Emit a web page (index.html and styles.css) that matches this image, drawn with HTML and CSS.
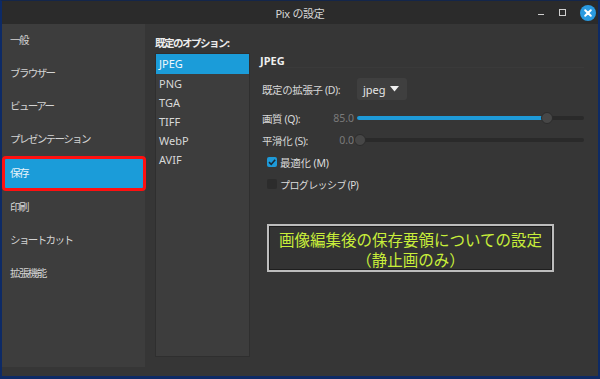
FILE: index.html
```html
<!DOCTYPE html>
<html lang="ja">
<head>
<meta charset="utf-8">
<title>Pix の設定</title>
<link rel="stylesheet" href="styles.css">
</head>
<body>
<div class="window">
  <div class="titlebar">
    <div></div>
    <div class="title">Pix の設定</div>
    <div class="controls">
      <span class="btn-min"></span>
      <span class="btn-max"></span>
      <span class="btn-close">
        <svg width="16" height="16" viewBox="0 0 16 16"><circle cx="8" cy="8" r="8" fill="#2a9ae0"/><path d="M5.2 5.2 L10.8 10.8 M10.8 5.2 L5.2 10.8" stroke="#fff" stroke-width="2" stroke-linecap="round"/></svg>
      </span>
    </div>
  </div>
  <div class="content">
    <nav class="sidebar">
      <div class="nav-item">一般</div>
      <div class="nav-item">ブラウザー</div>
      <div class="nav-item">ビューアー</div>
      <div class="nav-item">プレゼンテーション</div>
      <div class="nav-item selected">保存</div>
      <div class="nav-item">印刷</div>
      <div class="nav-item">ショートカット</div>
      <div class="nav-item">拡張機能</div>
    </nav>
    <main class="main">
      <section class="formats">
        <div class="formats-title">既定のオプション:</div>
        <div class="format-list">
          <div class="format selected">JPEG</div>
          <div class="format">PNG</div>
          <div class="format">TGA</div>
          <div class="format">TIFF</div>
          <div class="format">WebP</div>
          <div class="format">AVIF</div>
        </div>
      </section>
      <section class="options">
        <div class="opt-title">JPEG</div>
        <div class="row row-combo">
          <span class="label">既定の拡張子 (D):</span>
          <span class="combo">jpeg <svg width="9" height="6" viewBox="0 0 9 6"><path d="M0 0 H9 L4.5 5.5 Z" fill="#eee"/></svg></span>
        </div>
        <div class="row">
          <span class="label">画質 (Q):<span class="num">85.0</span></span>
          <span class="slider"><span class="fill" style="width:190px"></span><span class="thumb" style="left:184px"></span></span>
        </div>
        <div class="row">
          <span class="label">平滑化 (S):<span class="num">0.0</span></span>
          <span class="slider"><span class="thumb" style="left:-3px"></span></span>
        </div>
        <div class="row check-row">
          <span class="check on"><svg width="10" height="10" viewBox="0 0 10 10"><path d="M2 5.2 L4.2 7.3 L8.2 2.8" stroke="#1b2a36" stroke-width="1.6" fill="none"/></svg></span>
          <span class="check-label">最適化 (M)</span>
        </div>
        <div class="row check-row">
          <span class="check"></span>
          <span class="check-label small">プログレッシブ (P)</span>
        </div>
        <div class="note">
          <div>画像編集後の保存要領についての設定</div>
          <div>（静止画のみ）</div>
        </div>
      </section>
    </main>
  </div>
</div>
</body>
</html>
```
FILE: styles.css
```css
* { box-sizing: border-box; }
html, body { margin: 0; padding: 0; background: #0d2a66; }
body {
  font-family: "Noto Sans", "Noto Sans CJK JP", sans-serif;
  color: #dcdcdc;
  font-size: 10px;
}
.window {
  width: 600px;
  height: 379px;
  background: #363636;
  border-left: 2px solid #0d2a66;
  border-right: 2px solid #0d2a66;
  border-bottom: 3px solid #0d2a66;
  border-top: 1px solid #14264a;
  display: flex;
  flex-direction: column;
  overflow: hidden;
}
.titlebar {
  height: 23px;
  background: #2b2b2b;
  display: grid;
  grid-template-columns: 1fr auto 1fr;
  align-items: center;
}
.title {
  font-size: 11px;
  color: #d6d6d6;
  letter-spacing: -0.3px;
}
.controls {
  display: flex;
  justify-content: flex-end;
  align-items: center;
  padding-right: 2px;
}
.btn-min {
  width: 6px;
  height: 1px;
  background: #cfcfcf;
  margin-top: 4px;
  margin-right: 15px;
}
.btn-max {
  width: 7px;
  height: 7px;
  border: 1.5px solid #cfcfcf;
  margin-right: 14px;
}
.btn-close { display: flex; }

.content {
  flex: 1;
  display: flex;
  min-height: 0;
}
.sidebar {
  width: 143px;
  height: 343px;
  background: #3d3d3d;
  display: flex;
  flex-direction: column;
}
.nav-item {
  height: 33px;
  flex: none;
  line-height: 33px;
  padding-left: 8px;
  font-size: 10.5px;
  letter-spacing: -1.6px;
  color: #d4d4d4;
}
.nav-item.selected {
  height: 35px;
  background: #1b9cd9;
  color: #e8f4fb;
  border: 3px solid #ff1010;
  border-radius: 4px;
  margin-right: -1px;
  padding-left: 5px;
  line-height: 29px;
}
.main {
  flex: 1;
  display: flex;
}
.formats {
  padding-left: 10px;
  padding-top: 11px;
  width: 105px;
}
.formats-title {
  font-size: 10.5px;
  font-weight: bold;
  line-height: 16px;
  letter-spacing: -1.5px;
  color: #ececec;
}
.format-list {
  margin-top: 2px;
  width: 95px;
  height: 304px;
  background: #3d3d3d;
  border: 1px solid #2f2f2f;
}
.format {
  height: 19px;
  line-height: 19px;
  padding-left: 3px;
  font-size: 11px;
  color: #d8d8d8;
}
.format.selected {
  height: 20px;
  line-height: 20px;
  background: #1b9cd9;
  color: #f2f8fc;
}
.options {
  flex: 1;
  padding: 29px 14px 0 12px;
}
.opt-title {
  margin-left: -2px;
  font-size: 11px;
  font-weight: bold;
  line-height: 15px;
  height: 15px;
  color: #eeeeee;
  border-bottom: 1px solid #3a3a3a;
}
.row {
  display: flex;
  align-items: center;
  height: 20px;
  margin-top: 2px;
  font-size: 10.5px;
}
.row .label {
  width: 95px;
  flex: none;
  display: flex;
  justify-content: space-between;
  padding-right: 3px;
  letter-spacing: -0.4px;
  color: #d8d8d8;
}
.row-combo {
  height: 22px;
  margin-top: 10px;
}
.row-combo + .row { margin-top: 8px; }
.combo {
  width: 50px;
  height: 22px;
  background: #3f3f3f;
  border-radius: 3px;
  display: flex;
  align-items: center;
  gap: 4px;
  padding-left: 6px;
  font-size: 11px;
  color: #e6e6e6;
}
.combo svg { margin-top: -1px; }
.num {
  color: #7a7a7a;
  font-size: 10.5px;
  letter-spacing: 0;
}
.slider {
  position: relative;
  width: 227px;
  height: 4px;
  background: #2a2a2a;
  border-radius: 2px;
}
.fill {
  position: absolute;
  left: 0;
  top: 0;
  height: 4px;
  background: #1e9ad8;
  border-radius: 2px;
}
.thumb {
  position: absolute;
  top: -4px;
  width: 12px;
  height: 12px;
  border-radius: 50%;
  background: #474747;
  border: 1px solid #2c2c2c;
}
.check-row {
  padding-left: 5px;
  gap: 3px;
}
.check {
  width: 10px;
  height: 10px;
  border-radius: 2px;
  background: #2c2c2c;
  display: flex;
}
.check.on { background: #1e9ad8; }
.check-label {
  letter-spacing: -0.2px;
  color: #dcdcdc;
}
.check-label.small { font-size: 10px; letter-spacing: -0.6px; }
.note {
  margin-top: 30px;
  margin-left: 5px;
  width: 287px;
  height: 48px;
  border: 2px solid #bdbdbd;
  box-shadow: inset 0 0 0 1px #1e1e1e;
  background: #333333;
  color: #c8ee3a;
  font-size: 15.5px;
  line-height: 20px;
  text-align: center;
  padding-top: 3px;
  font-family: "Noto Sans CJK JP", sans-serif;
}
```
